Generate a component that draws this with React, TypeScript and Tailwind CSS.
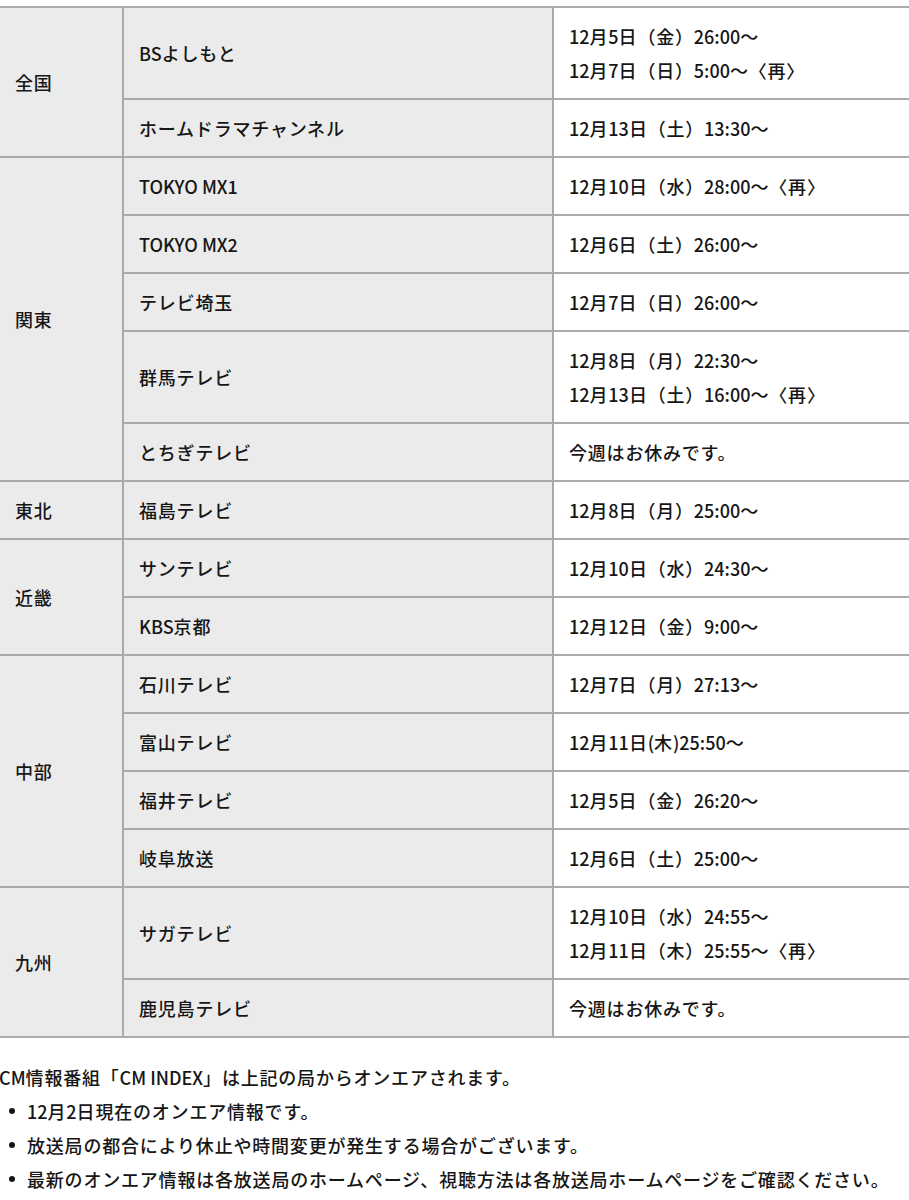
import React from "react";

type Row = { station: string; times: string[] };
type Group = { region: string; rows: Row[] };

const data: Group[] = [
  {
    region: "全国",
    rows: [
      { station: "BSよしもと", times: ["12月5日（金）26:00〜", "12月7日（日）5:00〜〈再〉"] },
      { station: "ホームドラマチャンネル", times: ["12月13日（土）13:30〜"] },
    ],
  },
  {
    region: "関東",
    rows: [
      { station: "TOKYO MX1", times: ["12月10日（水）28:00〜〈再〉"] },
      { station: "TOKYO MX2", times: ["12月6日（土）26:00〜"] },
      { station: "テレビ埼玉", times: ["12月7日（日）26:00〜"] },
      { station: "群馬テレビ", times: ["12月8日（月）22:30〜", "12月13日（土）16:00〜〈再〉"] },
      { station: "とちぎテレビ", times: ["今週はお休みです。"] },
    ],
  },
  {
    region: "東北",
    rows: [{ station: "福島テレビ", times: ["12月8日（月）25:00〜"] }],
  },
  {
    region: "近畿",
    rows: [
      { station: "サンテレビ", times: ["12月10日（水）24:30〜"] },
      { station: "KBS京都", times: ["12月12日（金）9:00〜"] },
    ],
  },
  {
    region: "中部",
    rows: [
      { station: "石川テレビ", times: ["12月7日（月）27:13〜"] },
      { station: "富山テレビ", times: ["12月11日(木)25:50〜"] },
      { station: "福井テレビ", times: ["12月5日（金）26:20〜"] },
      { station: "岐阜放送", times: ["12月6日（土）25:00〜"] },
    ],
  },
  {
    region: "九州",
    rows: [
      { station: "サガテレビ", times: ["12月10日（水）24:55〜", "12月11日（木）25:55〜〈再〉"] },
      { station: "鹿児島テレビ", times: ["今週はお休みです。"] },
    ],
  },
];

const notes = [
  "12月2日現在のオンエア情報です。",
  "放送局の都合により休止や時間変更が発生する場合がございます。",
  "最新のオンエア情報は各放送局のホームページ、視聴方法は各放送局ホームページをご確認ください。",
];

function T({ s }: { s: string }) {
  const parts = s.split(/([A-Za-z0-9:() ]+)/);
  return (
    <>
      {parts.map((p, i) =>
        p === "" ? null : /^[A-Za-z0-9:() ]+$/.test(p) ? (
          <span key={i} className="tracking-normal">
            {p}
          </span>
        ) : (
          <span key={i}>{p}</span>
        )
      )}
    </>
  );
}

export default function App() {
  return (
    <div
      className="w-[909px] bg-white text-[#161616] text-[18px] leading-[34px] font-medium tracking-[0.8px] overflow-hidden"
      style={{ fontFamily: '"Noto Sans CJK JP", "Noto Sans", sans-serif' }}
    >
      <div className="pt-[6px]">
        <table className="w-[909px] border-collapse table-fixed">
          <colgroup>
            <col className="w-[123px]" />
            <col className="w-[430px]" />
            <col />
          </colgroup>
          <tbody>
            {data.map((g) =>
              g.rows.map((r, i) => (
                <tr key={g.region + r.station}>
                  {i === 0 && (
                    <td
                      rowSpan={g.rows.length}
                      className="bg-[#ebebeb] border-y-2 border-r-2 border-[#aaaaaa] px-[15px] py-[11px] align-middle"
                    >
                      <T s={g.region} />
                    </td>
                  )}
                  <td className="bg-[#ebebeb] border-2 border-[#aaaaaa] px-[15px] py-[11px] align-middle">
                    <T s={r.station} />
                  </td>
                  <td className="bg-white border-y-2 border-l-2 border-[#aaaaaa] px-[15px] py-[11px] align-middle">
                    {r.times.map((t) => (
                      <div key={t}>
                        <T s={t} />
                      </div>
                    ))}
                  </td>
                </tr>
              ))
            )}
          </tbody>
        </table>
      </div>
      <div className="mt-[22px] pb-[10px]">
        <p className="-ml-[1px]">
          <T s="CM情報番組「CM INDEX」は上記の局からオンエアされます。" />
        </p>
        <ul>
          {notes.map((n) => (
            <li key={n} className="flex items-center">
              <span className="w-[27px] shrink-0 flex justify-start pl-[9px]">
                <span className="block w-[6px] h-[6px] rounded-full bg-[#161616]" />
              </span>
              <span>
                <T s={n} />
              </span>
            </li>
          ))}
        </ul>
      </div>
    </div>
  );
}
